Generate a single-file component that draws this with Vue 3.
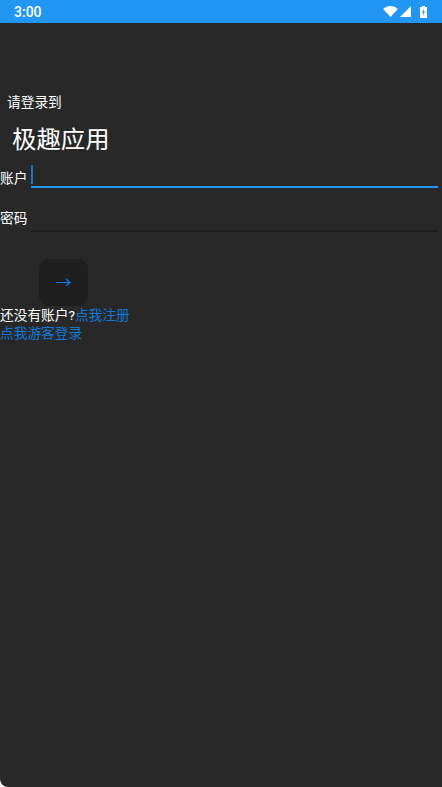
<template>
    <div class="screen">
        <div class="status-bar">
            <span class="time">3:00</span>
            <div class="status-icons">
                <svg width="15" height="11" viewBox="0 0 16 12"><path d="M0 3.200C2.200 1.200 5 0 8 0s5.800 1.200 8 3.200L8 12z" fill="#fff" /></svg>
                <svg width="11" height="11" viewBox="0 0 11 11"><path d="M11 0v11H0z" fill="#fff" /></svg>
                <svg class="battery" width="7" height="12" viewBox="0 0 7 12"><path d="M2 0h3v1h2v11H0V1h2z" fill="#fff" /><path d="M4 2.500 2 6.800h1.300L3 10l2-4.300H3.700z" fill="#2196f3" /></svg>
            </div>
        </div>
        <div class="login">
            <div class="hint">请登录到</div>
            <div class="app-name">极趣应用</div>
            <div class="form-row">
                <label>账户</label>
                <div class="field active"><span class="caret"></span></div>
            </div>
            <div class="form-row">
                <label>密码</label>
                <div class="field"></div>
            </div>
            <button class="submit">→</button>
            <div class="links">
                <div>还没有账户?<a>点我注册</a></div>
                <div><a>点我游客登录</a></div>
            </div>
        </div>
    </div>
</template>
<script setup>
</script>
<style scoped>
.screen {
    height: 787px;
    background-color: #282828;
    color: #fff;
    font-family: Roboto, "Noto Sans CJK SC", sans-serif;
    font-size: 13.7px;
    overflow: hidden;
    border-bottom-left-radius: 8px;
}
.status-bar {
    height: 23px;
    padding: 0 15px 0 14px;
    display: flex;
    align-items: center;
    justify-content: space-between;
    background-color: #2196f3;
}
.time {
    font-size: 14px;
    font-weight: 500;
}
.status-icons {
    display: flex;
    align-items: center;
    gap: 2px;
}
.battery {
    margin-left: 7px;
}
.login {
    padding: 68px 4px 0 0;
}
.hint {
    padding-left: 7px;
    line-height: 22px;
}
.app-name {
    padding: 9px 0 7px 12px;
    font-size: 24.4px;
    line-height: 36px;
}
.form-row {
    display: flex;
    align-items: flex-start;
    gap: 3.6px;
    margin-bottom: 17px;
}
.form-row label {
    margin-top: 3px;
    line-height: 20px;
    flex-shrink: 0;
}
.field {
    flex: 1;
    height: 25px;
    border-bottom: 2px solid #1f1f1f;
    position: relative;
}
.field.active {
    height: 21px;
    border-bottom-color: #2196f3;
}
.caret {
    position: absolute;
    left: 0;
    top: 0;
    width: 2px;
    height: 19px;
    background-color: #1976d2;
}
.submit {
    display: block;
    width: 49px;
    height: 47px;
    margin: 27px 0 0 39px;
    padding: 0;
    border: none;
    border-radius: 10px;
    background-color: #1f1f1f;
    color: #0f78e6;
    font-family: inherit;
    font-size: 16px;
    line-height: 47px;
}
.links {
    line-height: 18px;
}
.links a {
    color: #0d7adb;
}
</style>
<style>
body {
    background-color: #fff;
}
</style>
